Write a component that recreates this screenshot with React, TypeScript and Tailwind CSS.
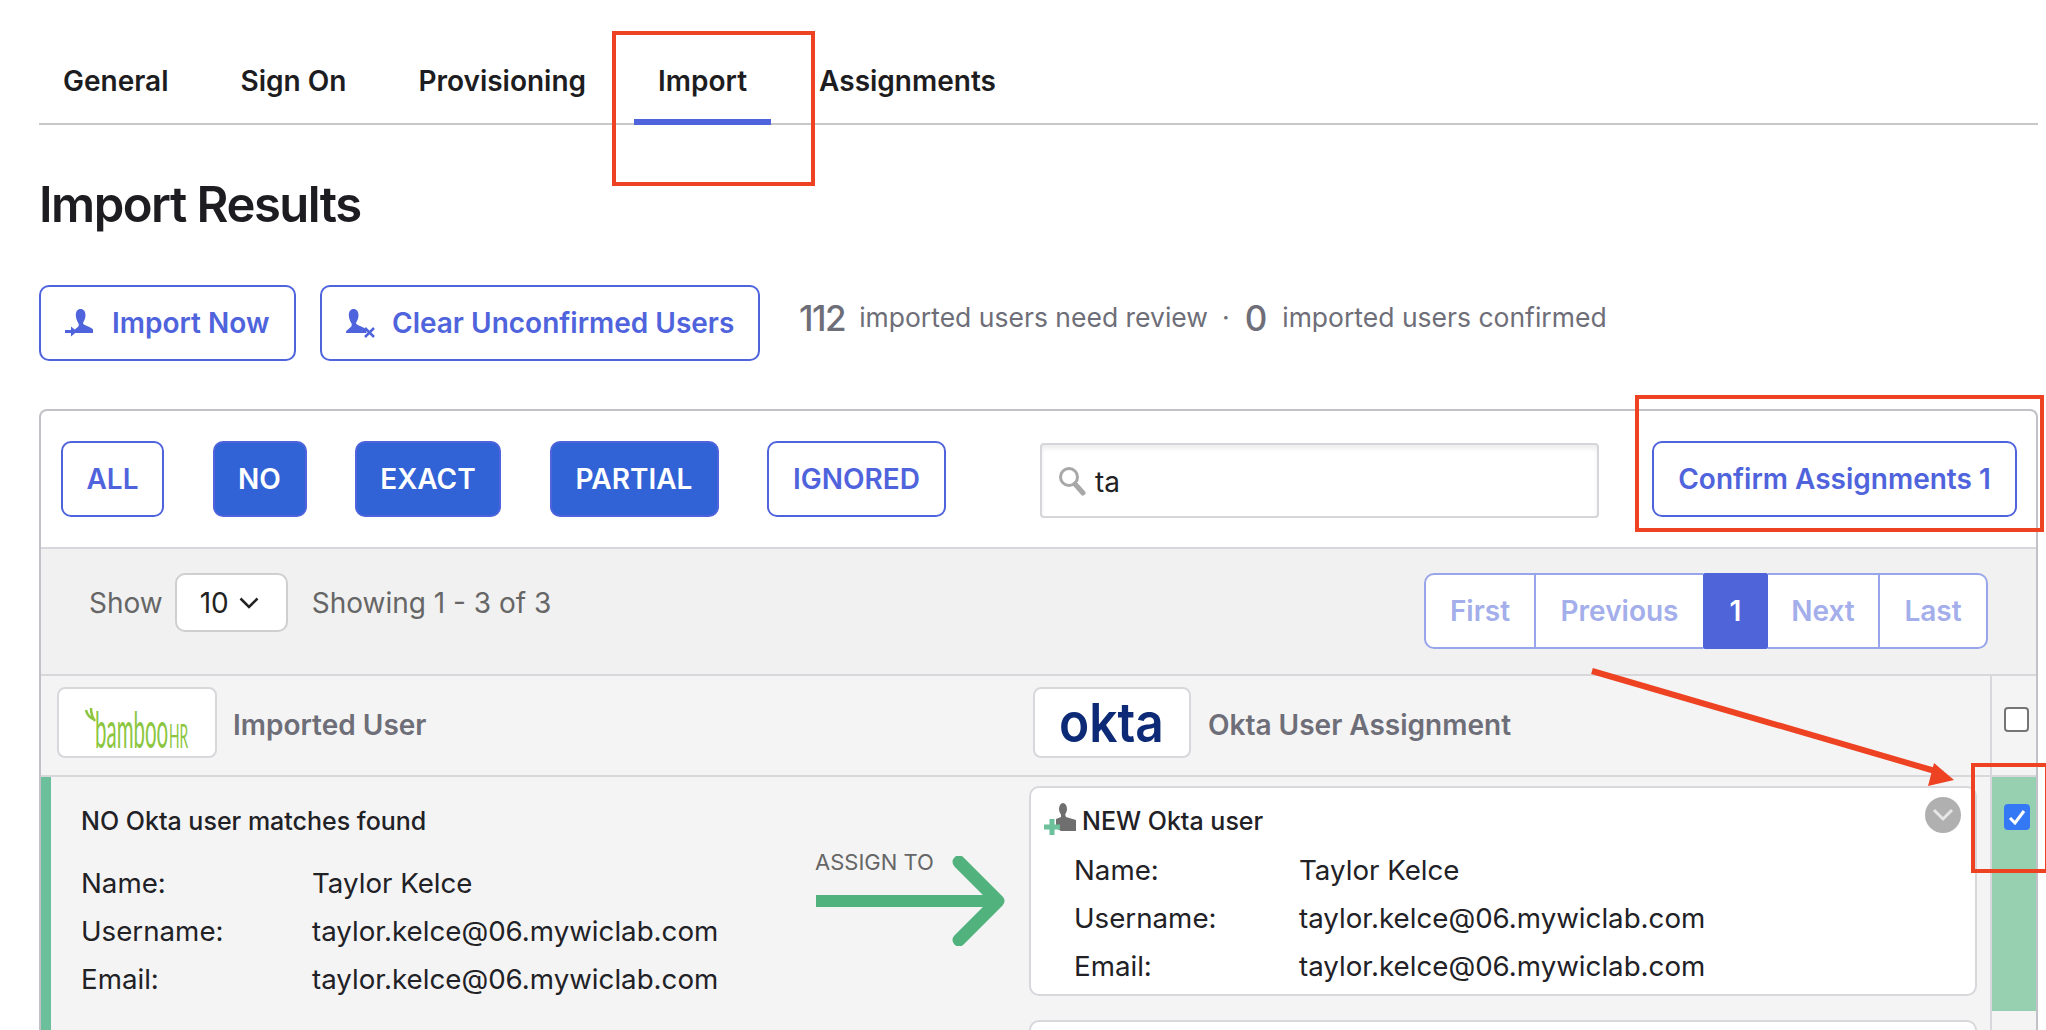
const tabs = ['General', 'Sign On', 'Provisioning', 'Import', 'Assignments'];

function PersonIcon({ className }: { className?: string }) {
  return (
    <path
      className={className}
      d="M15.5 1c3.2 0 5 2.6 5 6 0 3-1 5.4-2.2 7.2-.6 1 0 1.9 1.2 2.6 2.2 1.2 5.5 2.2 7.5 3.7 1 .8 1.5 2 1.5 4.5H8c0-1 .1-1.700.7-2.400 1.500-1.600 3.900-2.900 4.700-4.300.6-1 .5-2-.2-3.200C12 12.500 10.800 10 10.800 7c0-3.400 1.700-6 4.700-6z"
    />
  );
}

function ImportIcon() {
  return (
    <svg width="28" height="30" viewBox="0 0 28 30" className="fill-[#4f64dc] shrink-0">
      <PersonIcon />
      <rect x="0" y="22" width="9" height="3" />
      <path d="M6 18.500l6 5-6 5z" />
    </svg>
  );
}

function ClearIcon() {
  return (
    <svg width="30" height="30" viewBox="0 0 30 30" className="fill-[#4f64dc] shrink-0">
      <g transform="translate(-7 0)">
        <PersonIcon />
      </g>
      <path d="M20 20l9 9M29 20l-9 9" className="fill-none stroke-[#4f64dc]" strokeWidth="2.500" />
    </svg>
  );
}

function NewUserIcon() {
  return (
    <svg width="34" height="34" viewBox="0 0 34 34" className="shrink-0 -mt-[4px]">
      <ellipse cx="19" cy="6" rx="4" ry="6" fill="#6f6f6f" />
      <path d="M17 11h4l1 3 10 3v11H17l-5-3v-9l5-2z" fill="#6f6f6f" />
      <rect x="5.500" y="16" width="5" height="16" fill="#6cc09b" />
      <rect x="0" y="21.500" width="16" height="5" fill="#6cc09b" />
    </svg>
  );
}

function InfoRows({ labelWidth }: { labelWidth: string }) {
  const rows = [
    ['Name:', 'Taylor Kelce'],
    ['Username:', 'taylor.kelce@06.mywiclab.com'],
    ['Email:', 'taylor.kelce@06.mywiclab.com'],
  ];
  return (
    <div className={`grid ${labelWidth} auto-rows-[48px] items-center text-[27.7px] text-[#212126]`}>
      {rows.map(([label, value]) => (
        <div key={label} className="contents">
          <span>{label}</span>
          <span>{value}</span>
        </div>
      ))}
    </div>
  );
}

function FilterButton({ label, width, active }: { label: string; width: string; active?: boolean }) {
  return (
    <button
      className={
        active
          ? `${width} h-[76px] rounded-[10px] border-2 border-[#4f64dc] bg-[#3162d6] text-white text-[28px] font-semibold`
          : `${width} h-[76px] rounded-[10px] border-2 border-[#4f64dc] bg-white text-[#4f64dc] text-[28px] font-semibold`
      }
    >
      {label}
    </button>
  );
}

export default function App() {
  return (
    <div className="relative h-[1030px] w-[2046px] overflow-hidden bg-white pl-[39px] pr-[8px] flex flex-col font-['Inter',sans-serif]">
      <nav className="h-[125px] shrink-0 flex gap-[24px] border-b-2 border-[#c8c8c8]">
        {tabs.map((tab) => (
          <div
            key={tab}
            className={
              tab === 'Import'
                ? 'h-[125px] pt-[62px] px-[24px] border-b-[6px] border-[#4f64dc] text-[28px] leading-[38px] font-semibold text-[#1d1d21]'
                : 'h-[125px] pt-[62px] px-[24px] border-b-[6px] border-transparent text-[28px] leading-[38px] font-semibold text-[#1d1d21]'
            }
          >
            {tab}
          </div>
        ))}
      </nav>

      <h1 className="mt-[50px] text-[49px] leading-[60px] font-semibold tracking-[-1.5px] text-[#1d1d21]">Import Results</h1>

      <div className="mt-[50px] flex items-center">
        <button className="h-[76px] w-[257px] flex items-center pl-[24px] gap-[19px] rounded-[10px] border-2 border-[#4f64dc] text-[#4f64dc] text-[28px] font-semibold">
          <ImportIcon />
          Import Now
        </button>
        <button className="ml-[24px] h-[76px] w-[440px] flex items-center pl-[23px] gap-[17px] rounded-[10px] border-2 border-[#4f64dc] text-[#4f64dc] text-[28px] font-semibold">
          <ClearIcon />
          Clear Unconfirmed Users
        </button>
        <div className="ml-[39px] -mt-[10px] flex items-center text-[26.5px] text-[#6e6e78]">
          <span className="text-[35px] font-medium tracking-[-1.5px]">112</span>
          <span className="ml-[14px]">imported users need review</span>
          <span className="ml-[14px]">·</span>
          <span className="ml-[15px] text-[35px] font-medium">0</span>
          <span className="ml-[15px]">imported users confirmed</span>
        </div>
      </div>

      <section className="mt-[48px] flex-1 min-h-0 flex flex-col border-x-2 border-t-2 border-[#c1c1c8] rounded-t-[8px]">
        <div className="h-[138px] shrink-0 pt-[30px] pl-[20px] flex items-start border-b-2 border-[#d8d8dc]">
          <div className="flex gap-[48.5px]">
            <FilterButton label="ALL" width="w-[103px]" />
            <FilterButton label="NO" width="w-[94px]" active />
            <FilterButton label="EXACT" width="w-[146px]" active />
            <FilterButton label="PARTIAL" width="w-[169px]" active />
            <FilterButton label="IGNORED" width="w-[179px]" />
          </div>
          <div className="ml-[94px] mt-[2px] h-[75px] w-[559px] flex items-center pl-[15px] rounded-[4px] border-2 border-[#d5d5da] bg-white shadow-[inset_0_4px_4px_rgba(0,0,0,0.07)]">
            <svg width="30" height="30" viewBox="0 0 30 30" className="fill-none stroke-[#a8a8a8]">
              <circle cx="12" cy="11" r="8.500" strokeWidth="3" />
              <path d="M18 18l8 9" strokeWidth="5" strokeLinecap="round" />
            </svg>
            <span className="ml-[8px] mt-[2px] text-[28px] text-[#222]">ta</span>
          </div>
          <button className="ml-[53px] h-[76px] w-[365px] rounded-[10px] border-2 border-[#4f64dc] text-[#4f64dc] text-[28px] font-semibold">
            Confirm Assignments 1
          </button>
        </div>

        <div className="h-[127px] shrink-0 pt-[24px] pl-[48px] pr-[48px] flex items-start justify-between bg-[#f1f1f1] border-b-2 border-[#d8d8dc]">
          <div className="flex items-center text-[28px] text-[#666]">
            <span>Show</span>
            <div className="ml-[12px] h-[59px] w-[113px] flex items-center pl-[23px] gap-[10px] rounded-[10px] border-2 border-[#cfcfcf] bg-white text-[#222]">
              10
              <svg width="20" height="12" viewBox="0 0 20 12" className="fill-none stroke-[#222]">
                <path d="M1.500 1.500L10 10l8.500-8.500" strokeWidth="2.500" />
              </svg>
            </div>
            <span className="ml-[24px]">Showing 1 - 3 of 3</span>
          </div>
          <div className="flex h-[76px] text-[28px] font-semibold text-[#a3aeeb]">
            <div className="w-[112px] flex items-center justify-center bg-white border-2 border-[#99a5ea] rounded-l-[10px]">First</div>
            <div className="w-[167px] flex items-center justify-center bg-white border-y-2 border-[#99a5ea]">Previous</div>
            <div className="w-[65px] flex items-center justify-center bg-[#4f64d9] text-white rounded-[2px]">1</div>
            <div className="w-[112px] flex items-center justify-center bg-white border-y-2 border-r-2 border-[#99a5ea]">Next</div>
            <div className="w-[108px] flex items-center justify-center bg-white border-y-2 border-r-2 border-[#99a5ea] rounded-r-[10px]">Last</div>
          </div>
        </div>

        <div className="h-[101px] shrink-0 flex bg-[#f4f4f4] border-b-2 border-[#d8d8dc]">
          <div className="w-[992px] pl-[16px] flex items-center gap-[16px] -mt-[2px]">
            <div className="-mt-[4px] h-[71px] w-[160px] flex items-center justify-center rounded-[8px] border-2 border-[#d8d8dc] bg-white">
              <svg width="110" height="54" viewBox="0 0 110 54" className="overflow-visible">
                <path d="M4 14c1 5 4 8 9 10M9 12c0 5 1 9 4 13" fill="none" stroke="#8cc640" strokeWidth="2.500" />
                <text transform="translate(13 52) scale(0.41 1)" fontFamily="Lato" fontWeight="400" fontSize="50" fill="#8cc640">bamboo</text>
                <text transform="translate(87 52) scale(0.42 1)" fontFamily="Lato" fontWeight="400" fontSize="33" fill="#8cc640">HR</text>
              </svg>
            </div>
            <span className="text-[28px] font-semibold text-[#6e6e78]">Imported User</span>
          </div>
          <div className="flex-1 flex items-center gap-[17px] -mt-[2px]">
            <div className="-mt-[4px] h-[71px] w-[158px] flex items-center justify-center rounded-[8px] border-2 border-[#d8d8dc] bg-white">
              <svg width="110" height="50" viewBox="0 0 110 50" className="overflow-visible">
                <text transform="translate(2 44) scale(0.92 1)" fontFamily="Inter" fontWeight="600" fontSize="54" fill="#0c2a75">okta</text>
              </svg>
            </div>
            <span className="text-[28px] font-semibold text-[#6e6e78]">Okta User Assignment</span>
          </div>
          <div className="w-[46px] shrink-0 border-l-2 border-[#d8d8dc] pl-[12px] pt-[31px]">
            <div className="h-[25px] w-[25px] rounded-[4px] border-2 border-[#757575] bg-white" />
          </div>
        </div>

        <div className="flex-1 min-h-0 flex bg-[#f4f4f4]">
          <div className="w-[988px] shrink-0 flex border-l-[10px] border-[#6cbf9b]">
            <div className="w-[764px] pl-[30px] pt-[26px]">
              <p className="text-[25px] leading-[36px] font-medium text-[#212126]">NO Okta user matches found</p>
              <div className="mt-[21px]">
                <InfoRows labelWidth="grid-cols-[231px_1fr]" />
              </div>
            </div>
            <div className="pt-[71px]">
              <p className="text-[22px] leading-[28px] text-[#666]">ASSIGN TO</p>
              <svg width="195" height="90" viewBox="0 0 195 90" className="-mt-[20px] fill-none stroke-[#51b27e]">
                <path d="M1 45h183" strokeWidth="12" />
                <path d="M144 6l39 39-39 39" strokeWidth="13" strokeLinecap="round" strokeLinejoin="round" />
              </svg>
            </div>
          </div>
          <div className="w-[948px] shrink-0 pt-[9px]">
            <div className="relative h-[210px] rounded-[10px] border-2 border-[#d8d8dc] bg-white pt-[16px]">
              <div className="flex items-center pl-[13px] gap-[4px] h-[36px]">
                <NewUserIcon />
                <span className="text-[25px] font-medium text-[#212126]">NEW Okta user</span>
              </div>
              <div className="mt-[7px] pl-[43px]">
                <InfoRows labelWidth="grid-cols-[225px_1fr]" />
              </div>
              <div className="absolute top-[9px] right-[14px] h-[36px] w-[36px] rounded-full bg-[#b0b0b0] flex items-center justify-center">
                <svg width="22" height="14" viewBox="0 0 22 14" className="fill-none stroke-[#e6e6e6]">
                  <path d="M2 2l9 9 9-9" strokeWidth="3" />
                </svg>
              </div>
            </div>
            <div className="mt-[24px] h-[210px] rounded-[10px] border-2 border-[#d8d8dc] bg-white" />
          </div>
          <div className="ml-[13px] w-[46px] shrink-0 border-l-2 border-[#d8d8dc]">
            <div className="h-[234px] bg-[#97d0b0] pl-[12px] pt-[27px]">
              <div className="h-[26px] w-[26px] rounded-[4px] bg-[#3478f6] flex items-center justify-center">
                <svg width="18" height="16" viewBox="0 0 18 16" className="fill-none stroke-white">
                  <path d="M2 9l5 5L16 2" strokeWidth="3" />
                </svg>
              </div>
            </div>
          </div>
        </div>
      </section>

      {/* red annotations drawn on top of the screenshot */}
      <div className="absolute left-[612px] top-[31px] h-[155px] w-[203px] border-4 border-[#ee4323]" />
      <div className="absolute left-[1635px] top-[395px] h-[137px] w-[409px] border-4 border-[#ee4323]" />
      <div className="absolute left-[1971px] top-[763px] h-[110px] w-[78px] border-4 border-[#ee4323]" />
      <svg width="380" height="130" viewBox="0 0 380 130" className="absolute left-[1585px] top-[665px]">
        <path d="M7 6L350 106" stroke="#ee4323" strokeWidth="6" fill="none" />
        <path d="M349 98L369 115L343 121z" fill="#ee4323" />
      </svg>
    </div>
  );
}
